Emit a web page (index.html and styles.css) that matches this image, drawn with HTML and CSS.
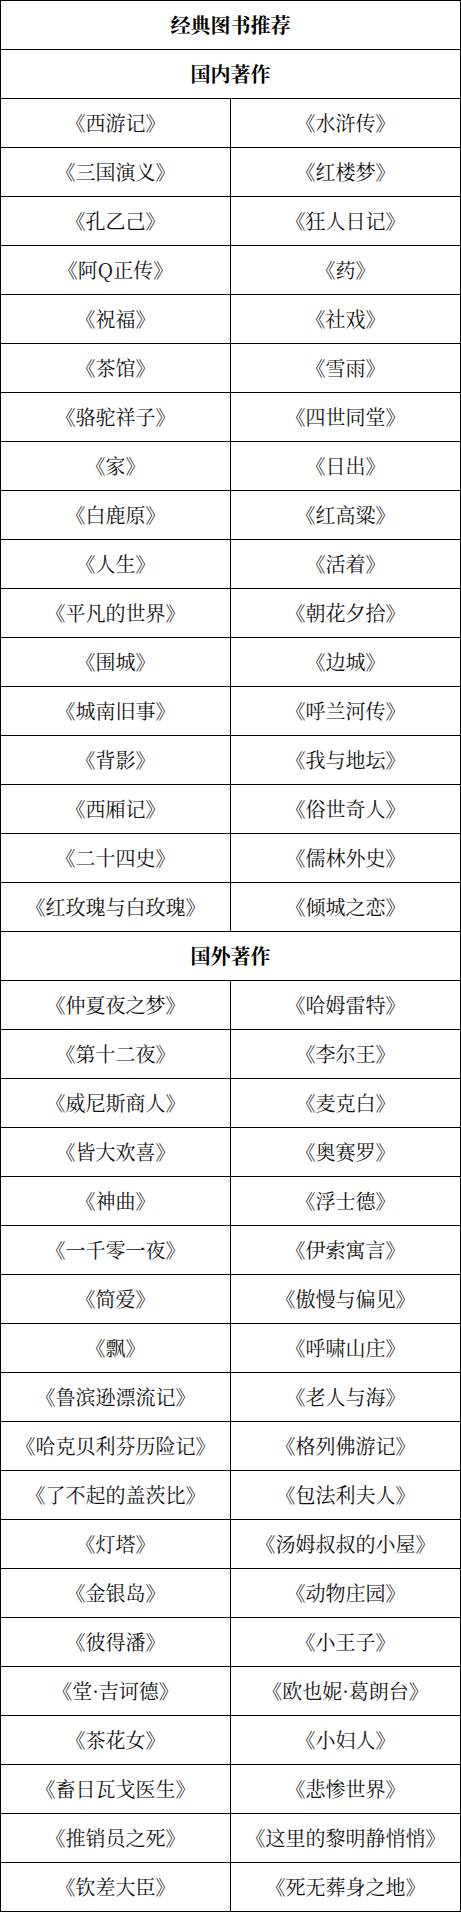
FILE: index.html
```html
<!DOCTYPE html>
<html lang="zh-CN">
<head>
<meta charset="utf-8">
<title>经典图书推荐</title>
<link rel="stylesheet" href="styles.css">
</head>
<body>
<table class="books">
<tbody>
<tr><th colspan="2" class="head">经典图书推荐</th></tr>
<tr><th colspan="2" class="head">国内著作</th></tr>
<tr><td class="left">《西游记》</td><td>《水浒传》</td></tr>
<tr><td class="left">《三国演义》</td><td>《红楼梦》</td></tr>
<tr><td class="left">《孔乙己》</td><td>《狂人日记》</td></tr>
<tr><td class="left">《阿Q正传》</td><td>《药》</td></tr>
<tr><td class="left">《祝福》</td><td>《社戏》</td></tr>
<tr><td class="left">《茶馆》</td><td>《雪雨》</td></tr>
<tr><td class="left">《骆驼祥子》</td><td>《四世同堂》</td></tr>
<tr><td class="left">《家》</td><td>《日出》</td></tr>
<tr><td class="left">《白鹿原》</td><td>《红高粱》</td></tr>
<tr><td class="left">《人生》</td><td>《活着》</td></tr>
<tr><td class="left">《平凡的世界》</td><td>《朝花夕拾》</td></tr>
<tr><td class="left">《围城》</td><td>《边城》</td></tr>
<tr><td class="left">《城南旧事》</td><td>《呼兰河传》</td></tr>
<tr><td class="left">《背影》</td><td>《我与地坛》</td></tr>
<tr><td class="left">《西厢记》</td><td>《俗世奇人》</td></tr>
<tr><td class="left">《二十四史》</td><td>《儒林外史》</td></tr>
<tr><td class="left">《红玫瑰与白玫瑰》</td><td>《倾城之恋》</td></tr>
<tr><th colspan="2" class="head">国外著作</th></tr>
<tr><td class="left">《仲夏夜之梦》</td><td>《哈姆雷特》</td></tr>
<tr><td class="left">《第十二夜》</td><td>《李尔王》</td></tr>
<tr><td class="left">《威尼斯商人》</td><td>《麦克白》</td></tr>
<tr><td class="left">《皆大欢喜》</td><td>《奥赛罗》</td></tr>
<tr><td class="left">《神曲》</td><td>《浮士德》</td></tr>
<tr><td class="left">《一千零一夜》</td><td>《伊索寓言》</td></tr>
<tr><td class="left">《简爱》</td><td>《傲慢与偏见》</td></tr>
<tr><td class="left">《飘》</td><td>《呼啸山庄》</td></tr>
<tr><td class="left">《鲁滨逊漂流记》</td><td>《老人与海》</td></tr>
<tr><td class="left">《哈克贝利芬历险记》</td><td>《格列佛游记》</td></tr>
<tr><td class="left">《了不起的盖茨比》</td><td>《包法利夫人》</td></tr>
<tr><td class="left">《灯塔》</td><td>《汤姆叔叔的小屋》</td></tr>
<tr><td class="left">《金银岛》</td><td>《动物庄园》</td></tr>
<tr><td class="left">《彼得潘》</td><td>《小王子》</td></tr>
<tr><td class="left">《堂·吉诃德》</td><td>《欧也妮·葛朗台》</td></tr>
<tr><td class="left">《茶花女》</td><td>《小妇人》</td></tr>
<tr><td class="left">《畜日瓦戈医生》</td><td>《悲惨世界》</td></tr>
<tr><td class="left">《推销员之死》</td><td>《这里的黎明静悄悄》</td></tr>
<tr><td class="left">《钦差大臣》</td><td>《死无葬身之地》</td></tr>
</tbody>
</table>
</body>
</html>
```

FILE: styles.css
```css
html, body {
  margin: 0;
  padding: 0;
  background: #ffffff;
}

.books {
  border-collapse: collapse;
  width: 461px;
  table-layout: fixed;
  font-family: "Noto Serif CJK SC", "Source Han Serif SC", "AR PL UMing CN", "Noto Sans CJK SC", serif;
  font-size: 20px;
  color: #111111;
}

.books th,
.books td {
  border: 1px solid #000000;
  height: 48px;
  padding: 0;
  text-align: center;
  vertical-align: middle;
  white-space: nowrap;
  line-height: 48px;
}

.books .head {
  font-weight: bold;
  color: #000000;
}

.books .left {
  width: 230px;
}
```
